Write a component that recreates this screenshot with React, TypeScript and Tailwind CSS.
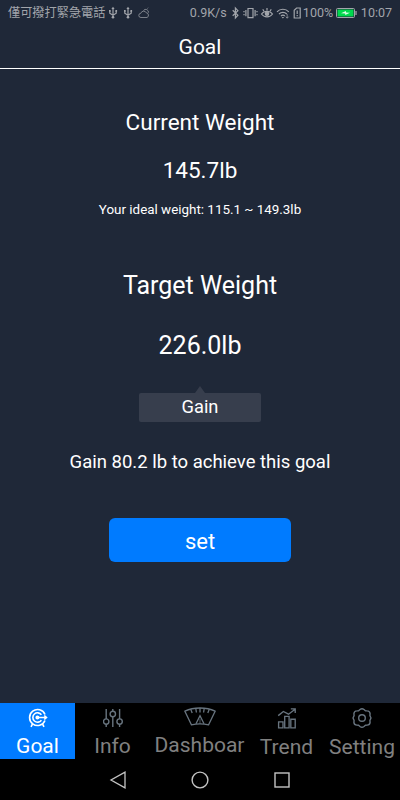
import React from 'react';
import clsx from 'clsx';

const UsbIcon = () => (
  <svg viewBox="0 0 10 14" className="w-[10px] h-[14px]" fill="none" stroke="currentColor" strokeWidth="1.2">
    <path d="M5 2v9M1.8 5v2.2L5 9.3l3.2-2.1V5" />
    <path d="M3.4 3 5 .8 6.6 3z" fill="currentColor" stroke="none" />
    <circle cx="5" cy="11.3" r="1.3" fill="currentColor" stroke="none" />
    <path d="M1 4h1.7v1.7H1zM7.4 4h1.7v1.7H7.4z" fill="currentColor" stroke="none" />
  </svg>
);

const CloudIcon = () => (
  <svg viewBox="0 0 12 12" className="w-[12px] h-[12px]" fill="none" stroke="currentColor" strokeWidth="0.7">
    <path d="M3 10.5a2.1 2.1 0 0 1-.2-4.2 3 3 0 0 1 5.6-.4 2.4 2.4 0 0 1 .6 4.6z" />
    <path d="M5.5 3.5a2.7 2.7 0 0 1 4.8 2.3M9.5 1.5l.6-.8" />
  </svg>
);

const StatusIcons = () => (
  <svg viewBox="0 0 73 14" className="w-[73px] h-[14px] shrink-0" fill="none" stroke="currentColor" strokeWidth="1.2">
    {/* bluetooth */}
    <path d="m4.7 4.2 5.2 5L7.4 12V2l2.5 2.7-5.2 5" />
    {/* vibrate */}
    <path d="M20 2.5h5v9.2h-5zM17.9 4v6.2M27.1 4v6.2" />
    <path d="M16 5v1.2M16 8v1.2M29 5v1.2M29 8v1.2" />
    {/* eye comfort */}
    <path d="M33.5 8c2.6-3.6 8.4-3.6 11 0-2.6 3.8-8.4 3.8-11 0z" />
    <circle cx="39" cy="7.8" r="1.7" fill="currentColor" />
    <path d="M39 2v2.5M34.8 3.2l1.1 2M43.2 3.2l-1.1 2" />
    {/* wifi */}
    <path d="M49 5.8c3.2-3.4 8.6-3.4 11.8 0M51 8c2.2-2.2 5.6-2.2 7.8 0M53 10c1.2-1.1 2.7-1.1 3.8 0" />
    <path d="m53.7 11 1.2 1.4 1.2-1.4z" fill="currentColor" stroke="none" />
    <path d="M59.2 8v4.2M57.8 10.7l1.4 1.5 1.4-1.5" strokeWidth=".7" />
    {/* sim alert */}
    <path d="M68.6 2h3.6v10h-6V4.3zM69.2 4.6v3.3M69.2 9v1.3" />
  </svg>
);

const BatteryIcon = () => (
  <svg viewBox="0 0 21 10" className="w-[21px] h-[10px] shrink-0">
    <rect x=".5" y=".5" width="18" height="9" rx="1" fill="none" stroke="#a2a5ab" />
    <path d="M20 3v4" stroke="#a2a5ab" strokeWidth="1.3" />
    <rect x="1.5" y="1.5" width="16" height="7" fill="#00d94d" />
    <path d="M5 5.2 10 3v1.5l4 .3L9.2 7V5.5z" fill="#d9ffe5" />
  </svg>
);

const GoalIcon = () => (
  <svg viewBox="0 0 20 20" className="w-[20px] h-[20px]" fill="none" stroke="currentColor" strokeWidth="1.6">
    <path d="M17 6.5A8 8 0 1 0 17 12.5" />
    <path d="M13.4 6.8a4.7 4.7 0 1 0 0 5.4" />
    <circle cx="9.4" cy="9.5" r="1.2" fill="currentColor" />
    <path d="M9.6 9.5h8.8M16.3 7.5l2.2 2-2.2 2M4.5 16 3 18.8M14.5 16l1.5 2.8" />
  </svg>
);

const InfoIcon = () => (
  <svg viewBox="0 0 20 20" className="w-[20px] h-[20px]" fill="none" stroke="currentColor" strokeWidth="1.4">
    <circle cx="3.2" cy="13.6" r="2.7" />
    <circle cx="9.8" cy="6" r="2.7" />
    <circle cx="16.6" cy="13.6" r="2.7" />
    <path d="M3.2 1v9.9M3.2 16.3V19M9.8 1v2.3M9.8 8.7V19M16.6 1v9.9M16.6 16.3V19" />
  </svg>
);

const DashboardIcon = () => (
  <svg viewBox="0 0 32 19" className="w-[32px] h-[19px]" fill="none" stroke="currentColor" strokeWidth="1.3">
    <path d="M.9 4.2c9-4.3 21.2-4.3 30.2 0l-6.5 13.6c-5.4-1.2-11.8-1.2-17.2 0z" />
    <path d="m12 16.8 4-8 4 8M6.8 2.6l1.4 3.5M11.8 1.5l.6 4M16 1v4.5M20.2 1.5l-.6 4M25.2 2.6l-1.4 3.5" />
    <path d="M16 12v4.8" strokeWidth=".7" />
  </svg>
);

const TrendIcon = () => (
  <svg viewBox="0 0 20 22" className="w-[20px] h-[22px]" fill="none" stroke="currentColor" strokeWidth="1.4">
    <path d="M1.2 14.5h4.6v6.3H1.2zM7.6 8.8h4.6v12H7.6zM14 11.8h4.6v9H14z" />
    <path d="m.8 8 5.4-4.4 5.4 2.9 6.5-5M14 1h4.6v4.3" />
  </svg>
);

const SettingIcon = () => (
  <svg viewBox="0 0 20 20" className="w-[20px] h-[20px]" fill="none" stroke="currentColor" strokeWidth="1.4" strokeLinejoin="round">
    <path d="M8 1.5Q10 0 12 1.5l1.4 1.2 1.8.2q2.6.2 2.9 2.8l-.2 1.8.6 1.4q.8 1.1 0 2.2l-.6 1.4.2 1.8q-.3 2.6-2.9 2.8l-1.8.2L12 18.5q-2 1.5-4 0l-1.4-1.2-1.8-.2q-2.6-.2-2.9-2.8l.2-1.8-.6-1.4q-.8-1.1 0-2.2l.6-1.4-.2-1.8q.3-2.6 2.9-2.8l1.8-.2z" />
    <circle cx="10" cy="10" r="3.3" />
  </svg>
);

const tabs = [
  { label: 'Goal', icon: <GoalIcon />, className: 'w-[75px] pt-[5px] bg-[#007bff] text-white', labelClass: 'mt-[6px] text-white' },
  { label: 'Info', icon: <InfoIcon />, className: 'w-[75px] pt-[5px] text-[#68747f]', labelClass: 'mt-[6px] text-[#808080]' },
  { label: 'Dashboar', icon: <DashboardIcon />, className: 'w-[99px] pt-[4px] text-[#68747f]', labelClass: 'mt-[7px] text-[#808080]' },
  { label: 'Trend', icon: <TrendIcon />, className: 'w-[75px] pt-[5px] text-[#68747f]', labelClass: 'mt-[6px] text-[#808080]' },
  { label: 'Setting', icon: <SettingIcon />, className: 'w-[76px] pt-[5px] text-[#68747f]', labelClass: 'mt-[7px] text-[#808080]' },
];

const StatusBar = () => (
  <div className="flex h-[26px] items-center px-[8px] text-[#a2a5ab] text-[12px] leading-none whitespace-nowrap">
    <span className="w-[98px] pt-px text-[12.2px]">僅可撥打緊急電話</span>
    <div className="flex items-center gap-[5px] ml-[2px]">
      <UsbIcon />
      <UsbIcon />
      <CloudIcon />
    </div>
    <div className="ml-auto flex items-center">
      <span className="w-[38px] text-[12.5px]">0.9K/s</span>
      <StatusIcons />
      <span className="ml-[2px] w-[33px] text-[12.5px]">100%</span>
      <BatteryIcon />
      <span className="ml-[4px] text-[12.5px]">10:07</span>
    </div>
  </div>
);

const App: React.FC = () => {
  return (
    <div className="flex h-[800px] w-[400px] flex-col overflow-hidden bg-[#1f2838] text-white font-[Roboto,'Noto_Sans_CJK_TC',sans-serif]">
      <StatusBar />
      <header className="flex h-[43px] items-center justify-center border-b border-white pt-[2px] text-[21px]">
        <h1>Goal</h1>
      </header>

      <main className="flex flex-1 flex-col items-center whitespace-nowrap">
        <h2 className="mt-[38px] text-[22.5px] leading-[30px]">Current Weight</h2>
        <p className="mt-[18px] text-[22.5px] leading-[30px]">145.7lb</p>
        <p className="mt-[15px] text-[13.4px] leading-[20px]">Your ideal weight: 115.1 ~ 149.3lb</p>

        <h2 className="mt-[51px] text-[25px] leading-[30px]">Target Weight</h2>
        <p className="mt-[30px] text-[25px] leading-[30px]">226.0lb</p>

        <svg viewBox="0 0 10 7" className="mt-[25px] h-[7px] w-[10px] fill-[#373e4d]">
          <path d="M5 0l5 7H0z" />
        </svg>
        <div className="flex h-[29px] w-[122px] items-center justify-center rounded-[2px] bg-[#373e4d] pb-[2px] text-[18.3px]">
          Gain
        </div>
        <p className="mt-[25px] text-[18.5px] leading-[30px]">Gain 80.2 lb to achieve this goal</p>

        <button className="mt-[41px] h-[44px] w-[182px] rounded-[6px] bg-[#007bff] pt-[2px] text-[22px] leading-[44px]">
          set
        </button>
      </main>

      <nav className="flex h-[56px] bg-black">
        {tabs.map((tab) => (
          <div key={tab.label} className={clsx('flex flex-col items-center', tab.className)}>
            {tab.icon}
            <span className={clsx('text-[21px] leading-[24px]', tab.labelClass)}>{tab.label}</span>
          </div>
        ))}
      </nav>

      <div className="flex h-[41px] items-center bg-black pl-[109px] text-[#c4c4c4]">
        <svg viewBox="0 0 18 18" className="h-[18px] w-[18px]" fill="none" stroke="currentColor" strokeWidth="1.3">
          <path d="M16 1.2v15.6L2 9z" />
        </svg>
        <svg viewBox="0 0 18 18" className="ml-[64px] h-[18px] w-[18px]" fill="none" stroke="currentColor" strokeWidth="1.4">
          <circle cx="9" cy="9" r="7.9" />
        </svg>
        <svg viewBox="0 0 16 16" className="ml-[65px] h-[16px] w-[16px]" fill="none" stroke="currentColor" strokeWidth="1.4">
          <rect x="1" y="1" width="14" height="14" />
        </svg>
      </div>
    </div>
  );
};

export default App;
